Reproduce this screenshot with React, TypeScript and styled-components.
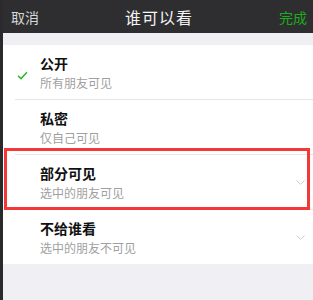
import React from "react";
import styled, { createGlobalStyle } from "styled-components";

const Global = createGlobalStyle`
  html, body { margin: 0; padding: 0; background: #efeff4; }
  body { font-family: "Noto Sans CJK SC", "Noto Sans", sans-serif; }
`;

const Screen = styled.div`
  width: 313px;
  height: 300px;
  background: #efeff4;
  border-left: 3px solid #2a2a2c;
  box-sizing: border-box;
  overflow: hidden;
`;

const Header = styled.div`
  height: 33px;
  background: #2e2e30;
  display: grid;
  grid-template-columns: 1fr auto 1fr;
  align-items: center;
  padding: 0 6px 0 8px;
`;

const HeaderBtn = styled.span<{ $green?: boolean; $right?: boolean }>`
  font-size: 14px;
  color: ${(p) => (p.$green ? "#1aad19" : "#d6d6d6")};
  justify-self: ${(p) => (p.$right ? "end" : "start")};
`;

const Title = styled.span`
  font-size: 16px;
  color: #f4f4f4;
  letter-spacing: 1px;
`;

const List = styled.div`
  margin-top: 12px;
  background: #fff;
`;

const Row = styled.div`
  position: relative;
  height: 54px;
  display: grid;
  grid-template-columns: 37px 1fr 22px;
  align-items: center;
`;

const Sep = styled.div`
  height: 1px;
  background: #e6e6e6;
  margin-left: 12px;
`;

const Mark = styled.div`
  display: flex;
  justify-content: center;
  padding-top: 6px;
  padding-left: 2px;
`;

const Texts = styled.div`
  display: flex;
  flex-direction: column;
  gap: 1px;
`;

const RowTitle = styled.span`
  font-size: 14px;
  font-weight: 700;
  color: #111;
  line-height: 19px;
`;

const RowSub = styled.span`
  font-size: 12px;
  color: #a0a0a0;
  line-height: 17px;
`;

const Chevron = styled.div`
  display: flex;
  align-items: center;
  justify-content: flex-end;
  padding-right: 8px;
`;

const Highlight = styled.div`
  position: absolute;
  left: 1px;
  right: 3px;
  top: -7px;
  bottom: -1px;
  border: 3px solid #f43838;
  pointer-events: none;
`;

const Check = () => (
  <svg width="11" height="9" viewBox="0 0 11 9">
    <path d="M1 4.8 L4 7.6 L10 1.2" fill="none" stroke="#2fb52f" strokeWidth="1.5" />
  </svg>
);

const Down = () => (
  <svg width="9" height="5" viewBox="0 0 9 5">
    <path d="M0.5 0.5 L4.5 4.3 L8.5 0.5" fill="none" stroke="#cdcdd0" strokeWidth="1" />
  </svg>
);

const items = [
  { t: "公开", s: "所有朋友可见", check: true, chev: false },
  { t: "私密", s: "仅自己可见", check: false, chev: false },
  { t: "部分可见", s: "选中的朋友可见", check: false, chev: true, hl: true },
  { t: "不给谁看", s: "选中的朋友不可见", check: false, chev: true },
];

export default function App() {
  return (
    <>
      <Global />
      <Screen>
        <Header>
          <HeaderBtn>取消</HeaderBtn>
          <Title>谁可以看</Title>
          <HeaderBtn $green $right>完成</HeaderBtn>
        </Header>
        <List>
          {items.map((it, i) => (
            <React.Fragment key={it.t}>
              {i > 0 && <Sep />}
              <Row>
                <Mark>{it.check && <Check />}</Mark>
                <Texts>
                  <RowTitle>{it.t}</RowTitle>
                  <RowSub>{it.s}</RowSub>
                </Texts>
                <Chevron>{it.chev && <Down />}</Chevron>
                {it.hl && <Highlight />}
              </Row>
            </React.Fragment>
          ))}
        </List>
      </Screen>
    </>
  );
}
